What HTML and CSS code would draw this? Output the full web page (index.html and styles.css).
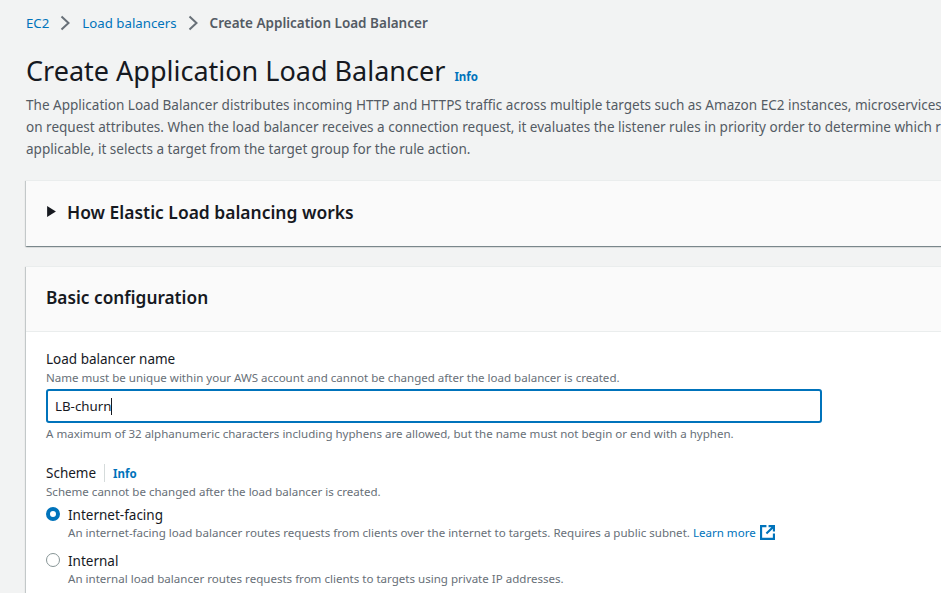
FILE: index.html
```html
<!DOCTYPE html>
<html lang="en">
<head>
<meta charset="utf-8">
<title>Create Application Load Balancer</title>
<link rel="stylesheet" href="styles.css">
</head>
<body>
<main class="page">
  <nav class="crumbs">
    <a class="link" href="#">EC2</a>
    <svg class="chev" viewBox="0 0 10 16" width="10" height="16"><path d="M1.5 1.5 8.5 8 1.5 14.500" fill="none" stroke="#687078" stroke-width="2"/></svg>
    <a class="link" href="#">Load balancers</a>
    <svg class="chev" viewBox="0 0 10 16" width="10" height="16"><path d="M1.5 1.500 8.500 8 1.500 14.500" fill="none" stroke="#687078" stroke-width="2"/></svg>
    <span class="crumb-current">Create Application Load Balancer</span>
  </nav>
  <header class="title-row">
    <h1 class="title">Create Application Load Balancer</h1>
    <a class="info title-info" href="#">Info</a>
  </header>
  <p class="intro">The Application Load Balancer distributes incoming HTTP and HTTPS traffic across multiple targets such as Amazon EC2 instances, microservices, and containers, based<br>on request attributes. When the load balancer receives a connection request, it evaluates the listener rules in priority order to determine which rule to apply, and if<br>applicable, it selects a target from the target group for the rule action.</p>

  <section class="card card-collapsed">
    <svg class="caret" viewBox="0 0 8 10" width="9" height="11"><path d="M0 0 8 5 0 10Z" fill="#16191f"/></svg>
    <h2 class="card-title card-title-large">How Elastic Load balancing works</h2>
  </section>

  <section class="card">
    <div class="card-head"><h2 class="card-title">Basic configuration</h2></div>
    <div class="card-body">
      <div class="field">
        <label class="label">Load balancer name</label>
        <p class="hint hint-below">Name must be unique within your AWS account and cannot be changed after the load balancer is created.</p>
        <div class="input"><span>LB-churn</span><i class="cursor"></i></div>
        <p class="hint hint-after">A maximum of 32 alphanumeric characters including hyphens are allowed, but the name must not begin or end with a hyphen.</p>
      </div>
      <div class="field">
        <div class="label-row"><label class="label">Scheme</label><a class="info scheme-info" href="#">Info</a></div>
        <p class="hint">Scheme cannot be changed after the load balancer is created.</p>
        <div class="radio">
          <span class="dot dot-on"></span>
          <div>
            <div class="radio-label">Internet-facing</div>
            <p class="hint">An internet-facing load balancer routes requests from clients over the internet to targets. Requires a public subnet. <a class="learn" href="#">Learn more</a>
              <svg class="ext" viewBox="0 0 14 14" width="15" height="15"><path d="M6 1H1V13H13V8" fill="none" stroke="#0073bb" stroke-width="2"/><path d="M8 0H14V6H12V3.400L6.700 8.700 5.300 7.300 10.600 2H8Z" fill="#0073bb"/></svg>
            </p>
          </div>
        </div>
        <div class="radio">
          <span class="dot"></span>
          <div>
            <div class="radio-label">Internal</div>
            <p class="hint">An internal load balancer routes requests from clients to targets using private IP addresses.</p>
          </div>
        </div>
      </div>
    </div>
  </section>
</main>
</body>
</html>
```
FILE: styles.css
```css
html, body {
  margin: 0;
  height: 100%;
  overflow: hidden;
  background: #f2f3f3;
}
body {
  font-family: "Noto Sans", "Open Sans", sans-serif;
  font-size: 14px;
  color: #16191f;
}
p, h1, h2 { margin: 0; }
a { text-decoration: none; }
.page {
  width: 1200px;
  padding: 14px 0 0 26px;
}
.crumbs {
  display: flex;
  align-items: center;
  height: 18px;
  font-size: 13.250px;
}
.link { color: #0073bb; }
.chev { margin: 0 12px 0 11px; }
.crumb-current { color: #545b64; font-weight: 600; font-size: 13.500px; }
.title-row {
  display: flex;
  align-items: baseline;
  margin-top: 20px;
}
.title {
  font-size: 27px;
  font-weight: 400;
  line-height: 38px;
}
.info { color: #0073bb; font-weight: 700; font-size: 11.500px; }
.title-info { margin-left: 9px; }
.intro {
  margin-top: 4px;
  font-size: 13.540px;
  line-height: 22px;
  color: #545b64;
  white-space: nowrap;
}
.card {
  background: #fff;
  box-shadow: 0 1px 1px 0 rgba(0, 28, 36, .3), 1px 1px 1px 0 rgba(0, 28, 36, .15), -1px 1px 1px 0 rgba(0, 28, 36, .15);
}
.card-collapsed {
  display: flex;
  align-items: center;
  gap: 11px;
  box-sizing: border-box;
  height: 66px;
  margin-top: 20px;
  padding: 0 0 4px 21px;
  background: #fafafa;
  border-top: 1px solid #eaeded;
}
.card-collapsed + .card { margin-top: 20px; border-top: 1px solid #eaeded; }
.card-title { font-size: 17.250px; font-weight: 600; }
.card-title-large { font-size: 17.450px; }
.card-head {
  display: flex;
  align-items: center;
  box-sizing: border-box;
  height: 65px;
  padding: 0 0 3px 20px;
  background: #fafafa;
  border-bottom: 1px solid #eaeded;
}
.card-body { padding: 18px 20px 20px; }
.field + .field { margin-top: 22px; }
.label { font-size: 13.500px; line-height: 18px; display: block; }
.hint { font-size: 11.560px; line-height: 16px; color: #687078; }
.hint-below { margin-top: 2px; }
.hint-after { margin-top: 3px; }
.input {
  display: flex;
  align-items: center;
  box-sizing: border-box;
  width: 776px;
  height: 34px;
  margin-top: 3px;
  padding-left: 7px;
  border: 2px solid #0073bb;
  border-radius: 3px;
  font-size: 13.300px;
}
.cursor {
  width: 1px;
  height: 17px;
  background: #16191f;
}
.label-row { display: flex; align-items: center; margin-bottom: 2px; }
.scheme-info {
  height: 18px;
  margin-left: 8px;
  padding-left: 8px;
  border-left: 1px solid #d5dbdb;
  line-height: 20px;
}
.radio {
  display: flex;
  gap: 8px;
  margin-top: 5px;
}
.radio + .radio { margin-top: 10px; }
.dot {
  box-sizing: border-box;
  flex: none;
  width: 14px;
  height: 14px;
  margin-top: 2px;
  border: 1px solid #879596;
  border-radius: 50%;
  background: #fff;
}
.dot-on { border: 4px solid #0073bb; }
.radio-label { font-size: 13.500px; line-height: 20px; }
.learn { color: #0073bb; }
.ext { vertical-align: -3px; margin-left: 1px; }
```
